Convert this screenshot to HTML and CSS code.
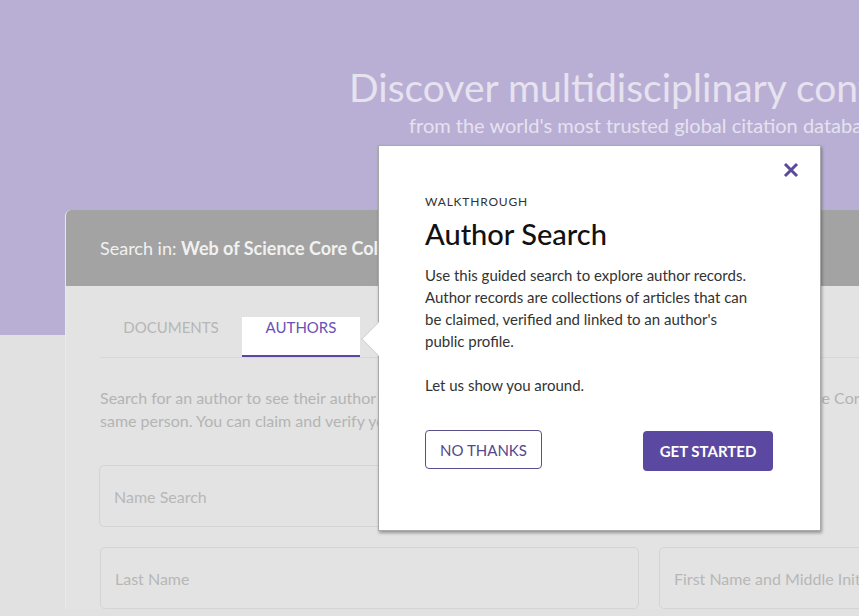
FILE: index.html
```html
<!DOCTYPE html>
<html lang="en">
<head>
  <meta charset="UTF-8" />
  <meta name="viewport" content="width=device-width, initial-scale=1" />
  <title>Author Search</title>
  <link rel="stylesheet" href="styles.css">
</head>
<body>

  <header class="hero">
    <h1>Discover multidisciplinary content</h1>
    <p class="hero-sub">from the world's most trusted global citation database</p>
  </header>

  <main class="search-card">
    <div class="card-head">
      Search in: <strong>Web of Science Core Collection</strong>
    </div>

    <div class="card-body">
      <nav class="tabs">
        <span class="tab">DOCUMENTS</span>
        <span class="tab active">AUTHORS</span>
      </nav>

      <p class="intro">
        Search for an author to see their author record. Author records group together articles in Web of Science Core Collection<br>
        same person. You can claim and verify your own author record.
      </p>

      <div class="field-row">
        <div class="field">Name Search</div>
      </div>
      <div class="field-row">
        <div class="field">Last Name</div>
        <div class="field wide">First Name and Middle Initial(s)</div>
      </div>
    </div>
  </main>

  <!-- walkthrough popover -->
  <section class="popover">
    <span class="pop-arrow"></span>
    <button class="pop-close" title="Close">
      <svg width="16" height="16" viewBox="0 0 16 16">
        <path d="M2 2 L14 14 M14 2 L2 14" stroke="#5a4a9c" stroke-width="3" stroke-linecap="butt" />
      </svg>
    </button>
    <div class="pop-kicker">WALKTHROUGH</div>
    <h2>Author Search</h2>
    <p>Use this guided search to explore author records.<br>
      Author records are collections of articles that can<br>
      be claimed, verified and linked to an author's<br>
      public profile.</p>
    <p>Let us show you around.</p>
    <div class="pop-actions">
      <button class="btn-outline">NO THANKS</button>
      <button class="btn-solid">GET STARTED</button>
    </div>
  </section>

</body>
</html>
```

FILE: styles.css
```css
/* Base */
* { box-sizing: border-box; }
body {
  margin: 0;
  width: 859px;
  height: 616px;
  overflow: hidden;
  position: relative;
  font-family: Lato, 'Noto Sans', sans-serif;
  background: linear-gradient(#b9afd5 0, #b9afd5 335px, #e1e1e1 335px);
}

/* Hero */
.hero {
  padding: 66px 0 0 349px;
  height: 210px;
  white-space: nowrap;
  overflow: hidden;
  color: #e6e2ef;
}
.hero h1 {
  margin: 0;
  font-size: 39px;
  font-weight: 400;
  line-height: 42px;
}
.hero-sub {
  margin: 6px 0 0 60px;
  font-size: 20px;
  line-height: 22px;
}

/* Card */
.search-card {
  margin-left: 65px;
  width: 900px;
  border-radius: 6px 6px 0 0;
  overflow: hidden;
  background: #e3e3e3;
  border-left: 1px solid #e9e9e9;
}
.card-head {
  height: 76px;
  background: #a3a3a3;
  color: #f1f1f1;
  font-size: 18px;
  padding: 27px 0 0 34px;
  white-space: nowrap;
}
.card-head strong { font-weight: 700; }
.card-body {
  padding: 31px 0 0 34px;
  color: #b4b4b4;
}
.tabs {
  display: flex;
  border-bottom: 1px solid #d7d7d7;
  width: 800px;
}
.tab {
  height: 40px;
  padding: 0;
  font-size: 15px;
  line-height: 21px;
  color: #b6b6b6;
  display: flex;
  align-items: flex-start;
  justify-content: center;
  width: 142px;
}
.tab.active {
  width: 118px;
  background: #fff;
  color: #6b50b9;
  border-bottom: 2px solid #5b46a3;
  margin-bottom: -1px;
}
.intro {
  margin: 28px 0 0;
  font-size: 16px;
  line-height: 23px;
  width: 760px;
  white-space: nowrap;
}
.field-row {
  display: flex;
  gap: 20px;
}
.field-row:first-of-type { margin-top: 33px; }
.field {
  width: 539px;
  height: 62px;
  border: 1px solid #d4d4d4;
  border-radius: 5px;
  padding: 0 14px;
  display: flex;
  align-items: center;
  font-size: 16px;
  color: #b7b7b7;
  white-space: nowrap;
  flex-shrink: 0;
}
.field-row + .field-row { margin-top: 20px; }
.field-row:first-of-type .field { margin-left: -1px; }
.field.wide { width: 260px; }

/* Popover */
.popover {
  position: absolute;
  left: 378px;
  top: 145px;
  width: 443px;
  height: 386px;
  background: #fff;
  border: 1px solid #a9a9a9;
  box-shadow: 1px 2px 3px rgba(0, 0, 0, 0.35);
  padding: 48px 46px 0 46px;
  color: #333;
}
.pop-arrow {
  position: absolute;
  left: -13px;
  top: 181px;
  width: 24px;
  height: 24px;
  background: #fff;
  transform: rotate(45deg);
  border-left: 1px solid #cfcfcf;
  border-bottom: 1px solid #cfcfcf;
}
.pop-close {
  position: absolute;
  top: 16px;
  right: 21px;
  border: none;
  background: none;
  padding: 0;
  cursor: pointer;
}
.pop-close svg { display: block; }
.pop-kicker {
  font-size: 12px;
  letter-spacing: 0.8px;
  line-height: 16px;
  color: #333;
}
.popover h2 {
  margin: 6px 0 0;
  font-size: 29px;
  font-weight: 500;
  line-height: 36px;
  color: #111;
}
.popover p {
  margin: 0;
  font-size: 15px;
  line-height: 22px;
  white-space: nowrap;
}
.popover h2 + p { margin-top: 12px; }
.popover p + p { margin-top: 22px; }
.pop-actions {
  display: flex;
  justify-content: space-between;
  align-items: flex-start;
  margin-top: 34px;
  width: 348px;
}
.btn-outline, .btn-solid {
  font-family: inherit;
  font-size: 15px;
  border-radius: 4px;
  cursor: pointer;
}
.btn-outline {
  width: 117px;
  height: 39px;
  background: #fff;
  border: 1px solid #5d4f8c;
  color: #55488a;
}
.btn-solid {
  width: 130px;
  height: 40px;
  margin-top: 1px;
  background: #5b48a0;
  border: none;
  color: #fff;
  font-weight: 700;
}
```
